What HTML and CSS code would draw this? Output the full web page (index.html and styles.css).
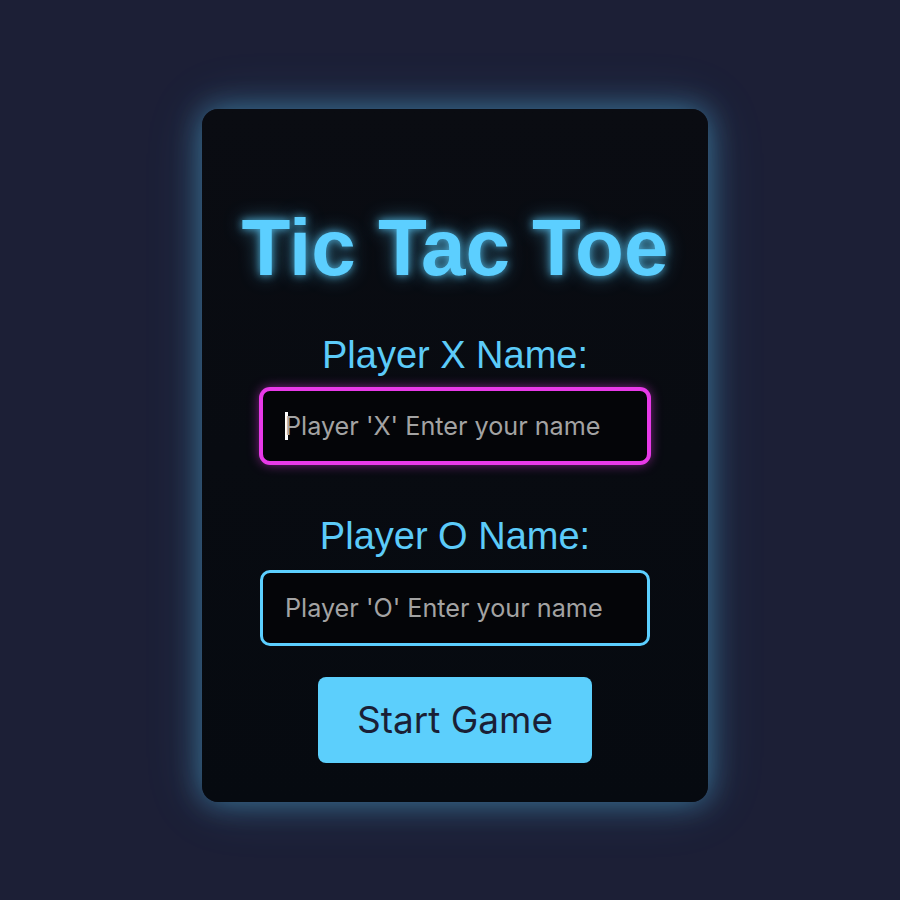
FILE: index.html
```html
<!DOCTYPE html>
<html lang="en">
<head>
<meta charset="utf-8">
<title>Tic Tac Toe</title>
<link rel="stylesheet" href="styles.css">
</head>
<body>
  <main class="card">
    <h1 class="title">Tic Tac Toe</h1>
    <label class="label" for="px">Player X Name:</label>
    <div class="field field-x">
      <span class="caret"></span>
      <span class="placeholder">Player 'X' Enter your name</span>
    </div>
    <label class="label label-o" for="po">Player O Name:</label>
    <div class="field field-o">
      <span class="placeholder">Player 'O' Enter your name</span>
    </div>
    <button class="start" type="button">Start Game</button>
  </main>
</body>
</html>
```
FILE: styles.css
```css
html, body {
  margin: 0;
  height: 100%;
}
body {
  box-sizing: border-box;
  padding: 10px 0 0 10px;
  background: #1c1f36;
  display: flex;
  align-items: center;
  justify-content: center;
  font-family: "Liberation Sans", Arial, sans-serif;
}
.card {
  width: 506px;
  box-sizing: border-box;
  padding: 40px 58px 39px;
  background: linear-gradient(180deg, #0a0c12 0%, #060a10 100%);
  border-radius: 16px;
  box-shadow: 0 0 30px rgba(92, 207, 255, 0.45), 0 0 60px rgba(92, 207, 255, 0.15);
  display: flex;
  flex-direction: column;
  align-items: center;
}
.title {
  margin: 53px 0 39px;
  font-size: 80px;
  line-height: 92px;
  font-weight: 700;
  color: #5ccfff;
  text-shadow: 0 0 8px rgba(92, 207, 255, 0.8), 0 0 20px rgba(92, 207, 255, 0.45);
  white-space: nowrap;
}
.label {
  font-size: 38px;
  line-height: 44px;
  color: #5ccbf9;
  margin-bottom: 11px;
}
.label-o {
  margin-top: 50px;
  margin-bottom: 12px;
}
.field {
  box-sizing: border-box;
  width: 390px;
  height: 76px;
  border: 3px solid #5ccfff;
  border-radius: 10px;
  background: #040508;
  display: flex;
  align-items: center;
  padding-left: 22px;
  font-family: Inter, "Noto Sans", sans-serif;
  font-size: 25.2px;
  color: #a3a3a3;
  white-space: nowrap;
}
.field-x {
  border-color: #e83ae8;
  box-shadow: 0 0 0 1px #e83ae8, 0 0 12px rgba(232, 58, 232, 0.6);
}
.caret {
  width: 3px;
  height: 28px;
  background: #ffffff;
  margin-right: -3px;
}
.start {
  margin-top: 31px;
  width: 274px;
  height: 86px;
  border: none;
  border-radius: 8px;
  background: #5ccffc;
  color: #1a1f36;
  font-family: Inter, "Noto Sans", sans-serif;
  font-size: 37px;
  cursor: pointer;
}
```
